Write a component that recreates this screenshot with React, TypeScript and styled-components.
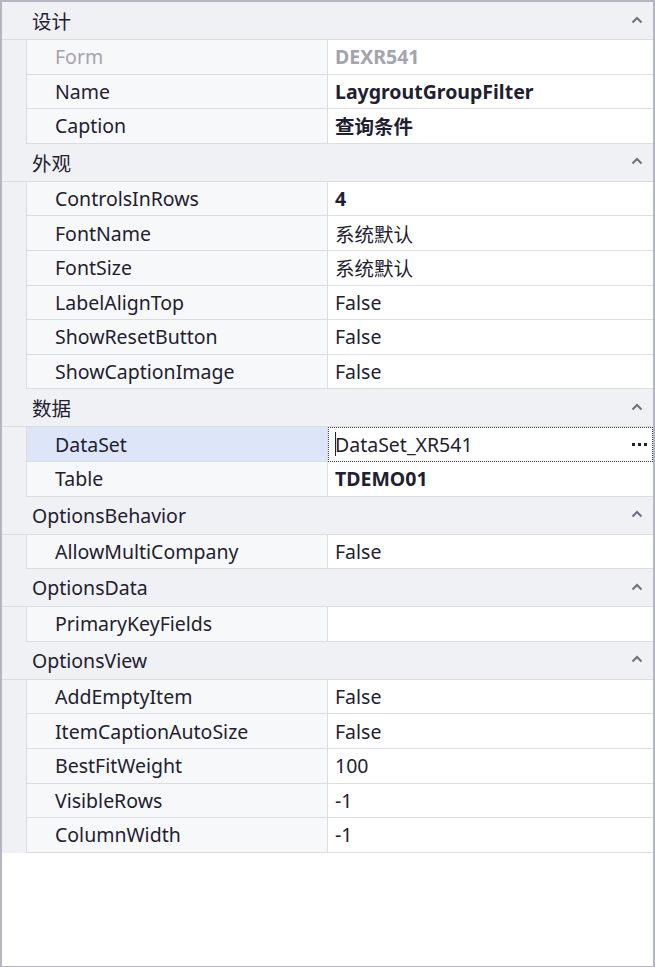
import { FC } from 'react';
import styled, { createGlobalStyle } from 'styled-components';

const colors = {
	border: '#b4b6c0',
	header: '#f0f1f4',
	grid: '#dcdde3',
	nameCell: '#f7f8fa',
	text: '#1f2030',
	muted: '#a3a4ad',
	selected: '#dde6f8',
	chevron: '#6e717c',
};

const GlobalStyle = createGlobalStyle`
	html, body {
		margin: 0;
		padding: 0;
		background: #ffffff;
	}
	* {
		box-sizing: border-box;
	}
`;

const Panel = styled.div`
	width: 655px;
	height: 967px;
	border: 2px solid ${colors.border};
	border-bottom-width: 1.5px;
	background: #ffffff;
	font-family: 'Noto Sans', 'Noto Sans CJK SC', sans-serif;
	font-size: 19.5px;
	color: ${colors.text};
	overflow: hidden;
`;

const Category = styled.section`
	display: flex;
	flex-direction: column;
`;

const CategoryHeader = styled.div`
	display: flex;
	align-items: center;
	justify-content: space-between;
	height: 38px;
	padding: 0 10px 0 30px;
	background: ${colors.header};
	border-bottom: 1px solid ${colors.grid};
	font-size: 19.5px;
`;

const Chevron = styled.svg`
	width: 12px;
	height: 8px;
	margin-top: -2px;
`;

const Row = styled.div`
	display: grid;
	grid-template-columns: 24px 302px 1fr;
	height: 34.6px;
	background: ${colors.header};
`;

const NameCell = styled.div<{ $selected?: boolean; $muted?: boolean }>`
	display: flex;
	align-items: center;
	padding-left: 28px;
	background: ${(p) => (p.$selected ? colors.selected : colors.nameCell)};
	color: ${(p) => (p.$muted ? colors.muted : colors.text)};
	border-left: 1px solid ${colors.grid};
	border-right: 1px solid ${colors.grid};
	border-bottom: 1px solid ${colors.grid};
	white-space: nowrap;
`;

const ValueCell = styled.div<{ $bold?: boolean; $muted?: boolean; $editing?: boolean }>`
	position: relative;
	display: flex;
	align-items: center;
	justify-content: space-between;
	padding: 0 4px 0 7px;
	background: #ffffff;
	font-weight: ${(p) => (p.$bold ? 700 : 400)};
	color: ${(p) => (p.$muted ? colors.muted : colors.text)};
	border-bottom: 1px solid ${colors.grid};
	white-space: nowrap;
	${(p) =>
		p.$editing &&
		`
		outline: 1px dotted #3a3c46;
		outline-offset: -1px;
		border-bottom-color: transparent;
	`}
`;

const Caret = styled.span`
	position: absolute;
	left: 7px;
	top: 5px;
	width: 1px;
	height: 24px;
	background: #1f2030;
`;

const Dots = styled.span`
	display: flex;
	gap: 3px;
	margin-right: 2px;
`;

const Dot = styled.i`
	width: 3px;
	height: 3px;
	background: #1f2030;
`;

const Filler = styled.div`
	flex: 1;
`;

interface IProp {
	name: string;
	value?: string;
	bold?: boolean;
	muted?: boolean;
	editing?: boolean;
}

interface ICategory {
	title: string;
	props: IProp[];
}

const categories: ICategory[] = [
	{
		title: '设计',
		props: [
			{ name: 'Form', value: 'DEXR541', bold: true, muted: true },
			{ name: 'Name', value: 'LaygroutGroupFilter', bold: true },
			{ name: 'Caption', value: '查询条件', bold: true },
		],
	},
	{
		title: '外观',
		props: [
			{ name: 'ControlsInRows', value: '4', bold: true },
			{ name: 'FontName', value: '系统默认' },
			{ name: 'FontSize', value: '系统默认' },
			{ name: 'LabelAlignTop', value: 'False' },
			{ name: 'ShowResetButton', value: 'False' },
			{ name: 'ShowCaptionImage', value: 'False' },
		],
	},
	{
		title: '数据',
		props: [
			{ name: 'DataSet', value: 'DataSet_XR541', editing: true },
			{ name: 'Table', value: 'TDEMO01', bold: true },
		],
	},
	{
		title: 'OptionsBehavior',
		props: [{ name: 'AllowMultiCompany', value: 'False' }],
	},
	{
		title: 'OptionsData',
		props: [{ name: 'PrimaryKeyFields', value: '' }],
	},
	{
		title: 'OptionsView',
		props: [
			{ name: 'AddEmptyItem', value: 'False' },
			{ name: 'ItemCaptionAutoSize', value: 'False' },
			{ name: 'BestFitWeight', value: '100' },
			{ name: 'VisibleRows', value: '-1' },
			{ name: 'ColumnWidth', value: '-1' },
		],
	},
];

const ChevronUp: FC = () => (
	<Chevron viewBox="0 0 12 8">
		<polyline
			points="1.5,6.5 6,2 10.5,6.5"
			fill="none"
			stroke={colors.chevron}
			strokeWidth="2"
		/>
	</Chevron>
);

const PropertyRow: FC<IProp> = ({ name, value, bold, muted, editing }) => (
	<Row>
		<span />
		<NameCell $selected={editing} $muted={muted}>
			{name}
		</NameCell>
		<ValueCell $bold={bold} $muted={muted} $editing={editing}>
			{editing && <Caret />}
			<span>{value}</span>
			{editing && (
				<Dots>
					<Dot />
					<Dot />
					<Dot />
				</Dots>
			)}
		</ValueCell>
	</Row>
);

const App: FC = () => {
	const sections = categories.map(({ title, props }) => (
		<Category key={title}>
			<CategoryHeader>
				<span>{title}</span>
				<ChevronUp />
			</CategoryHeader>
			{props.map((prop) => (
				<PropertyRow key={prop.name} {...prop} />
			))}
		</Category>
	));

	return (
		<>
			<GlobalStyle />
			<Panel>
				{sections}
				<Filler />
			</Panel>
		</>
	);
};

export default App;
